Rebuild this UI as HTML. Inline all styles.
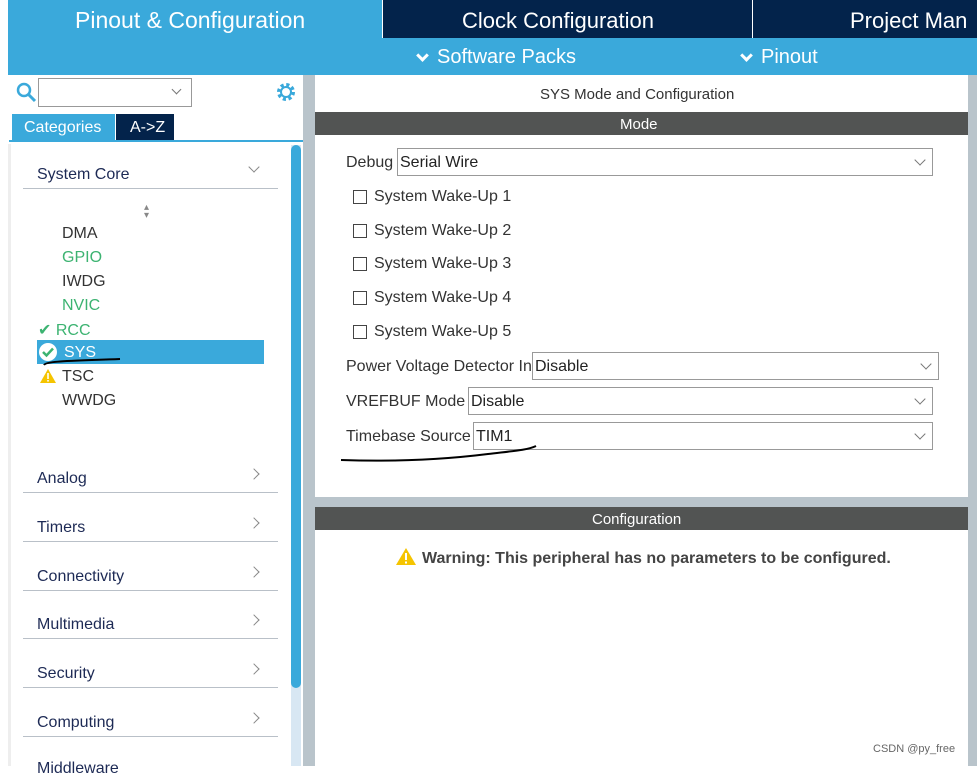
<!DOCTYPE html>
<html><head><meta charset="utf-8"><style>
*{margin:0;padding:0;box-sizing:border-box}
body{width:977px;height:766px;overflow:hidden;background:#fff;font-family:"Liberation Sans",sans-serif;position:relative}
.a{position:absolute}
.t{position:absolute;white-space:nowrap}
.sel{position:absolute;border:1px solid #999;background:#fff;height:28px;font-size:16px;color:#222;padding:5px 0 0 2px}
.sel:after{content:"";position:absolute;right:8px;top:7px;width:7px;height:7px;border-right:1px solid #777;border-bottom:1px solid #777;transform:rotate(45deg)}
.cb{position:absolute;width:14px;height:14px;border:1px solid #444;background:#fff}
.cat{position:absolute;left:23px;width:255px;border-bottom:1px solid #b9c0c8;height:31px;font-size:16px;color:#1d2a55;padding:8px 0 0 14px}
.chev{position:absolute;right:20px;top:8px;width:8px;height:8px;border-right:1.5px solid #888;border-top:1.5px solid #888;transform:rotate(45deg)}
.dn{display:inline-block;width:9px;height:9px;border-right:3px solid #fff;border-bottom:3px solid #fff;transform:rotate(45deg);margin:0 10px 5px 2px;vertical-align:middle}
</style></head><body>
<div class="a" style="left:8px;top:0;width:374px;height:38px;background:#3aa9db"></div>
<div class="t" style="left:75px;top:7px;font-size:23px;color:#fff">Pinout &amp; Configuration</div>
<div class="a" style="left:383px;top:0;width:369px;height:38px;background:#03234b"></div>
<div class="t" style="left:462px;top:8px;font-size:22px;color:#fff">Clock Configuration</div>
<div class="a" style="left:753px;top:0;width:224px;height:38px;background:#03234b"></div>
<div class="t" style="left:850px;top:8px;font-size:22px;color:#fff">Project Man</div>
<div class="a" style="left:8px;top:38px;width:969px;height:37px;background:#3aa9db"></div>
<div class="t" style="left:416px;top:46px;font-size:20px;color:#fff"><span class="dn"></span>Software Packs</div>
<div class="t" style="left:740px;top:46px;font-size:20px;color:#fff"><span class="dn"></span>Pinout</div>
<div class="a" style="left:303px;top:75px;width:12px;height:691px;background:#b9c4cb"></div>
<div class="a" style="left:968px;top:75px;width:9px;height:691px;background:#b9c4cb"></div>
<svg class="a" style="left:16px;top:82px" width="22" height="22"><circle cx="8" cy="8" r="6" fill="none" stroke="#3aa9db" stroke-width="2.5"/><line x1="12" y1="12" x2="19" y2="19" stroke="#3aa9db" stroke-width="3"/></svg>
<div class="a" style="left:38px;top:78px;width:154px;height:29px;border:1px solid #999;background:#fff"></div>
<div class="a" style="left:173px;top:86px;width:7px;height:7px;border-right:1px solid #777;border-bottom:1px solid #777;transform:rotate(45deg)"></div>
<svg class="a" style="left:275px;top:81px" width="22" height="22"><circle cx="11" cy="11" r="7" fill="none" stroke="#3aa9db" stroke-width="4" stroke-dasharray="3 2.5"/><circle cx="11" cy="11" r="5" fill="none" stroke="#3aa9db" stroke-width="2"/></svg>
<div class="a" style="left:12px;top:114px;width:103px;height:26px;background:#3aa9db"></div>
<div class="t" style="left:24px;top:119px;font-size:16px;color:#fff">Categories</div>
<div class="a" style="left:116px;top:114px;width:58px;height:26px;background:#03234b"></div>
<div class="t" style="left:130px;top:119px;font-size:16px;color:#fff">A-&gt;Z</div>
<div class="a" style="left:9px;top:140px;width:294px;height:2px;background:#3aa9db"></div>
<div class="a" style="left:8px;top:144px;width:3px;height:622px;background:#eee"></div>
<div class="a" style="left:291px;top:145px;width:10px;height:621px;background:#d8e7f3"></div>
<div class="a" style="left:291px;top:145px;width:10px;height:543px;background:#3aa9db;border-radius:5px"></div>
<div class="cat" style="top:158px">System Core<div class="chev" style="transform:rotate(135deg);top:5px"></div></div>
<div class="t" style="left:144px;top:204px;font-size:10px;color:#888;line-height:8px">▴<br>▾</div>
<div class="t" style="left:62px;top:225px;font-size:16px;color:#333">DMA</div>
<div class="t" style="left:62px;top:249px;font-size:16px;color:#3cb371">GPIO</div>
<div class="t" style="left:62px;top:273px;font-size:16px;color:#333">IWDG</div>
<div class="t" style="left:62px;top:297px;font-size:16px;color:#3cb371">NVIC</div>
<div class="t" style="left:38px;top:320px;font-size:16px;color:#3cb371">✔ RCC</div>
<div class="a" style="left:37px;top:340px;width:227px;height:24px;background:#3aa9db"></div>
<svg class="a" style="left:38px;top:342px" width="20" height="20"><circle cx="10" cy="10" r="9" fill="#fff"/><path d="M5 10 l3.5 3.5 L15 6.5" stroke="#3cb371" stroke-width="2.5" fill="none"/></svg>
<div class="t" style="left:64px;top:344px;font-size:16px;color:#fff">SYS</div>
<svg class="a" style="left:40px;top:355px" width="85" height="12"><path d="M4 10 C6 6 30 6 80 4" stroke="#000" stroke-width="2" fill="none"/></svg>
<svg class="a" style="left:39px;top:368px" width="18" height="16"><path d="M9 1 L17 15 L1 15 Z" fill="#f5c400"/><rect x="8.2" y="5" width="1.6" height="6" fill="#fff"/><rect x="8.2" y="12" width="1.6" height="1.6" fill="#fff"/></svg>
<div class="t" style="left:62px;top:368px;font-size:16px;color:#333">TSC</div>
<div class="t" style="left:62px;top:392px;font-size:16px;color:#333">WWDG</div>
<div class="cat" style="top:462px">Analog<div class="chev"></div></div>
<div class="cat" style="top:511px">Timers<div class="chev"></div></div>
<div class="cat" style="top:560px">Connectivity<div class="chev"></div></div>
<div class="cat" style="top:608px">Multimedia<div class="chev"></div></div>
<div class="cat" style="top:657px">Security<div class="chev"></div></div>
<div class="cat" style="top:706px">Computing<div class="chev"></div></div>
<div class="t" style="left:37px;top:760px;font-size:16px;color:#1d2a55">Middleware</div>
<div class="t" style="left:540px;top:86px;font-size:15px;color:#333">SYS Mode and Configuration</div>
<div class="a" style="left:315px;top:112px;width:653px;height:23px;background:#525453"></div>
<div class="t" style="left:620px;top:116px;font-size:15px;color:#fff">Mode</div>
<div class="t" style="left:346px;top:154px;font-size:16px;color:#333">Debug</div>
<div class="sel" style="left:397px;top:148px;width:536px">Serial Wire</div>
<div class="cb" style="left:353px;top:190px"></div><div class="t" style="left:374px;top:188px;font-size:16px;color:#333">System Wake-Up 1</div>
<div class="cb" style="left:353px;top:224px"></div><div class="t" style="left:374px;top:222px;font-size:16px;color:#333">System Wake-Up 2</div>
<div class="cb" style="left:353px;top:257px"></div><div class="t" style="left:374px;top:255px;font-size:16px;color:#333">System Wake-Up 3</div>
<div class="cb" style="left:353px;top:291px"></div><div class="t" style="left:374px;top:289px;font-size:16px;color:#333">System Wake-Up 4</div>
<div class="cb" style="left:353px;top:325px"></div><div class="t" style="left:374px;top:323px;font-size:16px;color:#333">System Wake-Up 5</div>
<div class="t" style="left:346px;top:358px;font-size:16px;color:#333">Power Voltage Detector In</div>
<div class="sel" style="left:532px;top:352px;width:407px">Disable</div>
<div class="t" style="left:346px;top:393px;font-size:16px;color:#333">VREFBUF Mode</div>
<div class="sel" style="left:468px;top:387px;width:465px">Disable</div>
<div class="t" style="left:346px;top:428px;font-size:16px;color:#333">Timebase Source</div>
<div class="sel" style="left:473px;top:422px;width:460px">TIM1</div>
<svg class="a" style="left:338px;top:440px" width="205" height="25"><path d="M3 20 C60 22 110 19 150 14 C175 11 190 10 198 6" stroke="#000" stroke-width="2" fill="none"/></svg>
<div class="a" style="left:315px;top:497px;width:653px;height:10px;background:#b9c4cb"></div>
<div class="a" style="left:315px;top:507px;width:653px;height:23px;background:#525453"></div>
<div class="t" style="left:592px;top:511px;font-size:15px;color:#fff">Configuration</div>
<svg class="a" style="left:395px;top:547px" width="22" height="19"><path d="M11 1 L21 18 L1 18 Z" fill="#f5c400"/><rect x="10" y="6" width="2" height="7" fill="#fff"/><rect x="10" y="14.5" width="2" height="2" fill="#fff"/></svg>
<div class="t" style="left:422px;top:550px;font-size:16px;font-weight:bold;color:#444">Warning: This peripheral has no parameters to be configured.</div>
<div class="t" style="left:873px;top:743px;font-size:11px;color:#666">CSDN @py_free</div>
</body></html>
